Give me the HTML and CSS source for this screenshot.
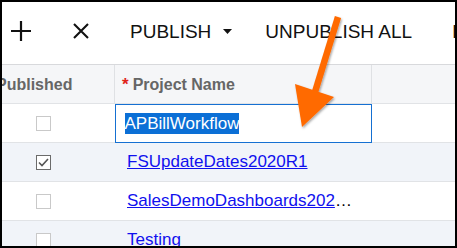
FILE: index.html
```html
<!DOCTYPE html>
<html lang="en">
<head>
  <meta charset="UTF-8">
  <title>Projects</title>
  <link rel="stylesheet" href="styles.css">
</head>
<body>
  <div class="frame">
    <div class="toolbar">
      <svg class="tool-icon plus" width="20" height="20" viewBox="0 0 20 20">
        <path d="M10 0 V20 M0 10 H20" stroke="#111" stroke-width="2.2" fill="none"/>
      </svg>
      <svg class="tool-icon cross" width="16" height="16" viewBox="0 0 16 16">
        <path d="M1 1 L15 15 M15 1 L1 15" stroke="#111" stroke-width="2.1" fill="none"/>
      </svg>
      <span class="tool-btn">PUBLISH</span>
      <svg class="caret" width="9" height="5" viewBox="0 0 9 5">
        <path d="M0 0 H9 L4.5 5 Z" fill="#111"/>
      </svg>
      <span class="tool-btn unpublish">UNPUBLISH ALL</span>
      <span class="tool-btn more">IMPORT</span>
    </div>

    <div class="grid">
      <div class="cell head first"><span class="head-label clipped">Published</span></div>
      <div class="cell head"><span class="req">*</span><span class="head-label">Project Name</span></div>
      <div class="cell head last"></div>

      <div class="cell check-cell"><span class="box"></span></div>
      <div class="cell edit-cell">
        <div class="editor"><span class="selected">APBillWorkflow</span></div>
      </div>
      <div class="cell"></div>

      <div class="cell check-cell alt"><span class="box checked">
        <svg width="11" height="9" viewBox="0 0 11 9"><path d="M1 4.5 L4 7.5 L10 1" stroke="#555" stroke-width="1.6" fill="none"/></svg>
      </span></div>
      <div class="cell name alt"><a href="#">FSUpdateDates2020R1</a></div>
      <div class="cell alt"></div>

      <div class="cell check-cell"><span class="box"></span></div>
      <div class="cell name"><a href="#">SalesDemoDashboards2020R1</a></div>
      <div class="cell"></div>

      <div class="cell check-cell alt"><span class="box"></span></div>
      <div class="cell name alt"><a href="#">Testing</a></div>
      <div class="cell alt"></div>
    </div>

    <!-- callout arrow drawn over the screen -->
    <svg class="callout" width="453" height="244" viewBox="2 2 453 244">
      <defs>
        <filter id="shade" x="-20%" y="-20%" width="140%" height="140%">
          <feDropShadow dx="1" dy="1.5" stdDeviation="1.2" flood-color="#000" flood-opacity="0.35"/>
        </filter>
      </defs>
      <g filter="url(#shade)" fill="#ff6a00">
        <path d="M338 17 L315 92" stroke="#ff6a00" stroke-width="6.5" fill="none"/>
        <polygon points="295,84 334,97 302,127"/>
      </g>
    </svg>
  </div>
</body>
</html>
```

FILE: styles.css
```css
body {
  margin: 0;
  font-family: "Liberation Sans", Arial, sans-serif;
  background: #fff;
}
.frame {
  position: relative;
  width: 457px;
  height: 248px;
  box-sizing: border-box;
  border: 2px solid #000;
  overflow: hidden;
  background: #fff;
}
.toolbar {
  display: flex;
  align-items: center;
  height: 63px;
  box-sizing: border-box;
  padding: 0 0 4px 9px;
  border-bottom: 1px solid #d8d9dc;
  white-space: nowrap;
  overflow: hidden;
}
.tool-icon {
  flex: none;
}
.cross {
  margin-left: 42px;
}
.tool-btn {
  font-size: 19px;
  color: #111;
  margin-top: 2px;
}
.tool-btn:first-of-type {
  margin-left: 41px;
}
.caret {
  flex: none;
  margin-left: 12px;
}
.unpublish {
  margin-left: 33px;
}
.more {
  margin-left: 40px;
}
.grid {
  display: grid;
  grid-template-columns: 113px 257px 1fr;
  grid-auto-rows: 39px;
}
.cell {
  box-sizing: border-box;
  border-bottom: 1px solid #e1e3e6;
  display: flex;
  align-items: center;
  min-width: 0;
  background: #fff;
}
.cell.alt {
  background: #f1f4f9;
}
.head {
  background: #f5f6f8;
  border-right: 1px solid #dfe1e4;
  padding-left: 7px;
  padding-top: 2px;
  font-size: 16px;
  font-weight: bold;
  color: #666;
}
.head.first {
  padding-left: 0;
}
.head.last {
  border-right: none;
}
.clipped {
  margin-left: -6px;
}
.req {
  color: #e0231a;
  margin-right: 4px;
  font-size: 17px;
}
.check-cell {
  padding-left: 34px;
}
.box {
  width: 15px;
  height: 15px;
  box-sizing: border-box;
  border: 1.5px solid #c9c9c9;
  background: #fff;
  display: flex;
  align-items: center;
  justify-content: center;
}
.box.checked {
  border-color: #6b6b6b;
}
.edit-cell {
  padding: 0;
  align-items: stretch;
}
.editor {
  flex: 1;
  border: 1.5px solid #1570d2;
  background: #fff;
  display: flex;
  align-items: center;
  padding-left: 8.5px;
  margin-bottom: -1px;
  font-size: 17px;
}
.selected {
  background: #0b6fd6;
  color: #fff;
  padding-top: 1px;
}
.name {
  padding: 0 11px 0 12px;
  font-size: 17px;
  color: #000;
  overflow: hidden;
  white-space: nowrap;
  text-overflow: ellipsis;
  display: block;
  line-height: 38px;
}
.name a {
  color: #1010ee;
  text-decoration: underline;
}
.callout {
  position: absolute;
  left: 0;
  top: 0;
  pointer-events: none;
}
```
